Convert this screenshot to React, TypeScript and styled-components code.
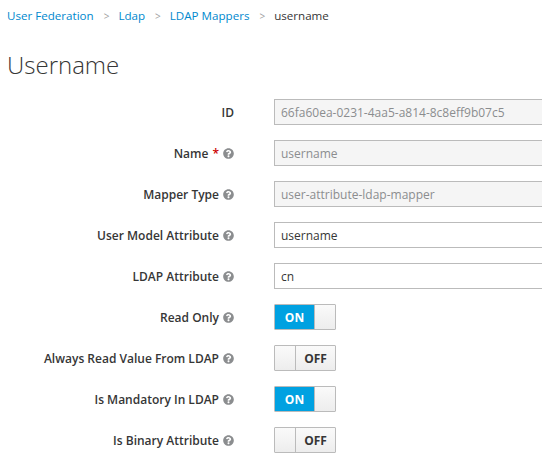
import styled, { createGlobalStyle } from "styled-components";
import { FaQuestionCircle } from "react-icons/fa";

const GlobalStyle = createGlobalStyle`
  body {
    margin: 0;
    background: #fff;
    font-family: "Open Sans", "Liberation Sans", sans-serif;
    font-size: 12px;
    color: #363636;
  }
`;

const Page = styled.div`
  padding: 0 0 0 7px;
  overflow: hidden;
  width: 542px;
  box-sizing: border-box;
`;

const Breadcrumb = styled.ol`
  list-style: none;
  margin: 0;
  padding: 6px 0 0;
  display: flex;
  align-items: center;
  height: 19px;
  font-size: 11.6px;
`;

const Crumb = styled.li<{ $active?: boolean }>`
  color: ${(p) => (p.$active ? "#363636" : "#0088ce")};
  white-space: nowrap;
`;

const Separator = styled.li`
  color: #a0a0a0;
  font-size: 10px;
  padding: 0 9px 0 10px;
`;

const Title = styled.h1`
  margin: 25px 0 0;
  font-size: 24px;
  font-weight: 300;
  line-height: 30px;
  height: 30px;
  color: #363636;
`;

const Form = styled.div`
  margin-top: 19px;
  display: flex;
  flex-direction: column;
  gap: 15px;
`;

const Row = styled.div`
  display: grid;
  grid-template-columns: 227px 1fr;
  column-gap: 40px;
  align-items: center;
  height: 26px;
`;

const Label = styled.label`
  display: flex;
  justify-content: flex-end;
  align-items: center;
  gap: 3px;
  font-weight: 600;
  font-size: 12px;
  color: #363636;
  white-space: nowrap;
`;

const Required = styled.span`
  color: #c00;
  font-weight: 600;
  margin-left: 1px;
`;

const Help = styled(FaQuestionCircle)`
  width: 11px;
  height: 11px;
  color: #8b8d8f;
  margin-left: 1px;
`;

const Input = styled.input<{ $disabled?: boolean }>`
  box-sizing: border-box;
  height: 26px;
  width: 300px;
  border: 1px solid #bbb;
  border-right: none;
  padding: 2px 6px;
  font-family: "Open Sans", "Liberation Sans", sans-serif;
  font-size: 12px;
  background: ${(p) => (p.$disabled ? "#f5f5f5" : "#fff")};
  color: ${(p) => (p.$disabled ? "#8b8d8f" : "#363636")};
  outline: none;
`;

const Switch = styled.div<{ $on: boolean }>`
  display: flex;
  flex-direction: ${(p) => (p.$on ? "row" : "row-reverse")};
  width: 62px;
  height: 26px;
  box-sizing: border-box;
  border: 1px solid #bbb;
  border-radius: 1px;
  overflow: hidden;
`;

const SwitchLabel = styled.span<{ $on: boolean }>`
  flex: 0 0 39px;
  display: flex;
  align-items: center;
  justify-content: center;
  font-weight: 700;
  font-size: 12px;
  color: ${(p) => (p.$on ? "#fff" : "#363636")};
  background: ${(p) =>
    p.$on ? "#00a1e1" : "linear-gradient(#fafafa, #ededed)"};
  border-left: ${(p) => (p.$on ? "none" : "1px solid #bbb")};
`;

const Handle = styled.span<{ $on: boolean }>`
  flex: 1;
  background: linear-gradient(#fafafa, #ededed);
  border-left: ${(p) => (p.$on ? "1px solid #bbb" : "none")};
`;

const Toggle = ({ on }: { on: boolean }) => (
  <Switch $on={on}>
    <SwitchLabel $on={on}>{on ? "ON" : "OFF"}</SwitchLabel>
    <Handle $on={on} />
  </Switch>
);

const App = () => {
  const fields = [
    { label: "ID", value: "66fa60ea-0231-4aa5-a814-8c8eff9b07c5", disabled: true, help: false },
    { label: "Name", value: "username", disabled: true, help: true, required: true },
    { label: "Mapper Type", value: "user-attribute-ldap-mapper", disabled: true, help: true },
    { label: "User Model Attribute", value: "username", disabled: false, help: true },
    { label: "LDAP Attribute", value: "cn", disabled: false, help: true },
  ];
  const toggles = [
    { label: "Read Only", on: true },
    { label: "Always Read Value From LDAP", on: false },
    { label: "Is Mandatory In LDAP", on: true },
    { label: "Is Binary Attribute", on: false },
  ];

  return (
    <Page>
      <GlobalStyle />
      <Breadcrumb>
        <Crumb>User Federation</Crumb>
        <Separator>&gt;</Separator>
        <Crumb>Ldap</Crumb>
        <Separator>&gt;</Separator>
        <Crumb>LDAP Mappers</Crumb>
        <Separator>&gt;</Separator>
        <Crumb $active>username</Crumb>
      </Breadcrumb>
      <Title>Username</Title>
      <Form>
        {fields.map((f) => (
          <Row key={f.label}>
            <Label>
              {f.label}
              {f.required && <Required>*</Required>}
              {f.help && <Help />}
            </Label>
            <Input $disabled={f.disabled} readOnly value={f.value} />
          </Row>
        ))}
        {toggles.map((t) => (
          <Row key={t.label}>
            <Label>
              {t.label}
              <Help />
            </Label>
            <Toggle on={t.on} />
          </Row>
        ))}
      </Form>
    </Page>
  );
};

export default App;
